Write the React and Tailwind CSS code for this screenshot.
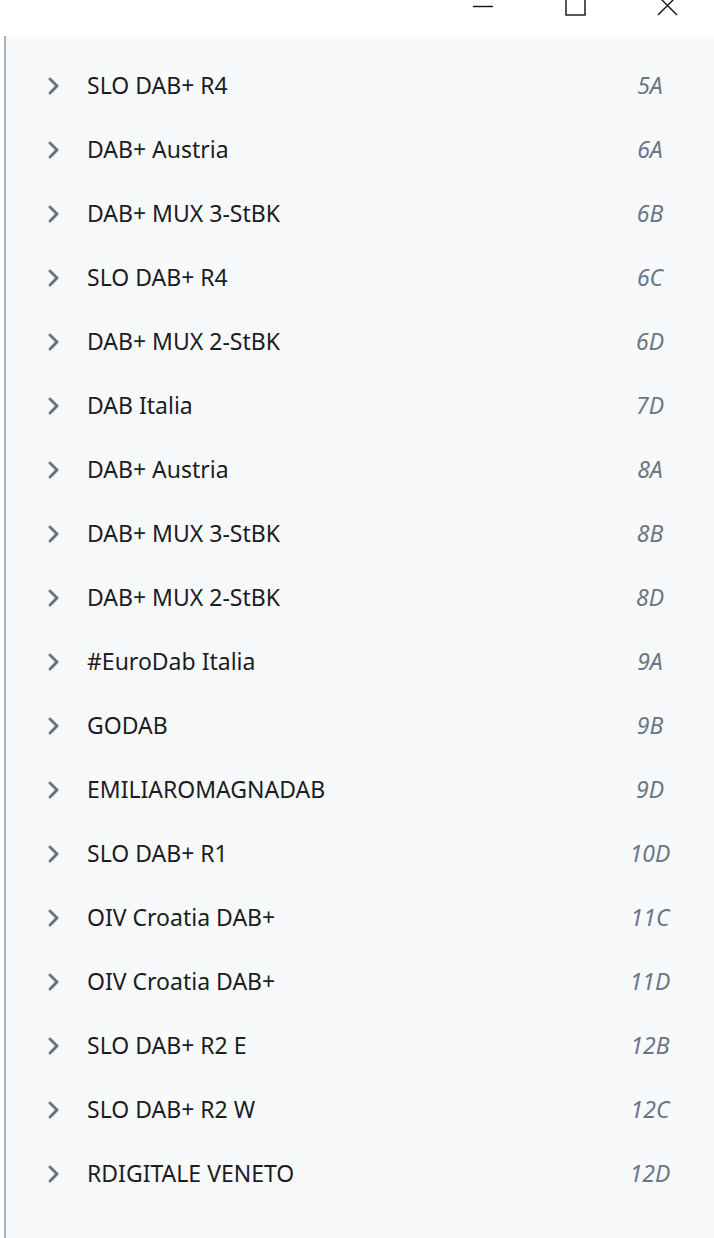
const ROWS = [
  ["SLO DAB+ R4", "5A"],
  ["DAB+ Austria", "6A"],
  ["DAB+ MUX 3-StBK", "6B"],
  ["SLO DAB+ R4", "6C"],
  ["DAB+ MUX 2-StBK", "6D"],
  ["DAB Italia", "7D"],
  ["DAB+ Austria", "8A"],
  ["DAB+ MUX 3-StBK", "8B"],
  ["DAB+ MUX 2-StBK", "8D"],
  ["#EuroDab Italia", "9A"],
  ["GODAB", "9B"],
  ["EMILIAROMAGNADAB", "9D"],
  ["SLO DAB+ R1", "10D"],
  ["OIV Croatia DAB+", "11C"],
  ["OIV Croatia DAB+", "11D"],
  ["SLO DAB+ R2 E", "12B"],
  ["SLO DAB+ R2 W", "12C"],
  ["RDIGITALE VENETO", "12D"],
];

const Chevron = () => (
  <svg width="14" height="20" viewBox="0 0 14 20" className="shrink-0 mt-[1px]">
    <path d="M3 3 L10 10 L3 17" fill="none" stroke="#6b7684" strokeWidth="3" strokeLinecap="round" strokeLinejoin="round" />
  </svg>
);

export default function App() {
  return (
    <div className="min-h-[1238px] bg-white flex flex-col font-['Noto_Sans','Open_Sans',sans-serif]">
      {/* title bar */}
      <div className="h-9 flex justify-end pr-[1px]">
        <div className="w-[92px] flex justify-center">
          <svg width="20" height="20" viewBox="0 0 20 20" className="-mt-1">
            <line x1="0" y1="10.5" x2="20" y2="10.5" stroke="#111" strokeWidth="1.4" />
          </svg>
        </div>
        <div className="w-[92px] flex justify-center">
          <svg width="21" height="21" viewBox="0 0 21 21" className="-mt-[5px]">
            <rect x="1" y="1" width="19" height="19" fill="none" stroke="#111" strokeWidth="1.4" />
          </svg>
        </div>
        <div className="w-[92px] flex justify-center">
          <svg width="21" height="21" viewBox="0 0 21 21" className="-mt-[5px]">
            <path d="M1 1 L20 20 M20 1 L1 20" fill="none" stroke="#111" strokeWidth="1.4" />
          </svg>
        </div>
      </div>

      {/* list panel */}
      <div className="flex-1 ml-1 border-l-2 border-[#a8b1be] bg-[#f8f9fb] pt-[17px]">
        {ROWS.map(([name, code], i) => (
          <div key={i} className="h-16 flex items-center pl-[41px] pr-[34px]">
            <Chevron />
            <span className="ml-[26px] flex-1 text-[23px] text-[#1c1d1f]">{name}</span>
            <span className="w-[60px] text-center text-[23px] italic text-[#6b7684]">{code}</span>
          </div>
        ))}
      </div>
    </div>
  );
}
